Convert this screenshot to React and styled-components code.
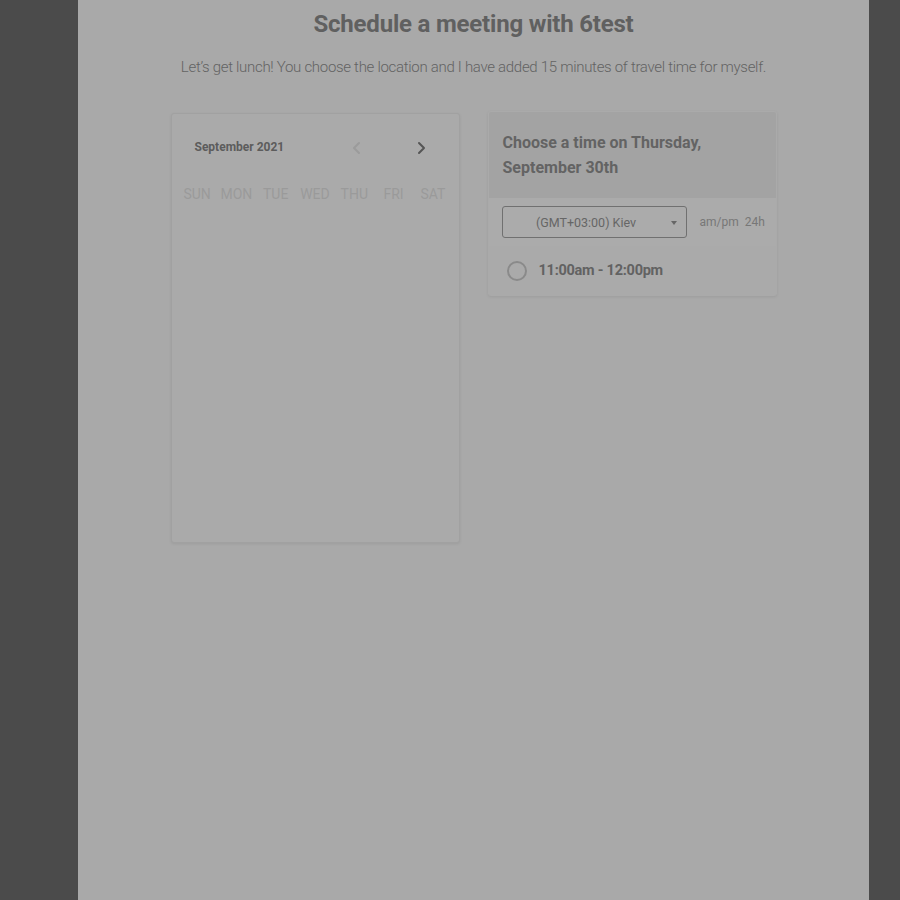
import React from "react";
import styled, { createGlobalStyle } from "styled-components";

const Global = createGlobalStyle`
  html, body { margin: 0; padding: 0; background: #4b4b4b; }
  body { font-family: Roboto, "Liberation Sans", sans-serif; }
`;

const Page = styled.div`
  display: flex;
  min-height: 900px;
  padding-left: 78px;
`;

const Sheet = styled.main`
  width: 791px;
  min-height: 900px;
  background: #a9a9a9;
  display: flex;
  flex-direction: column;
  align-items: center;
`;

const Title = styled.h1`
  margin: 9px 0 0;
  font-size: 24px;
  line-height: 30px;
  font-weight: 700;
  color: #606060;
  letter-spacing: -0.2px;
`;

const Subtitle = styled.p`
  margin: 18px 0 0;
  font-size: 15px;
  line-height: 20px;
  font-weight: 300;
  color: #636363;
  letter-spacing: -0.3px;
`;

const Columns = styled.div`
  display: flex;
  gap: 28px;
  margin-top: 34px;
  align-items: flex-start;
`;

const Card = styled.section`
  width: ${(p) => p.$w}px;
  box-sizing: border-box;
  border: 1px solid ${(p) => (p.$border ? "#a1a1a1" : "transparent")};
  border-radius: 3px;
  background: #aaaaaa;
  box-shadow: 0 1px 3px rgba(0, 0, 0, 0.08);
  overflow: hidden;
`;

const CalendarCard = styled(Card)`
  height: 430px;
  margin-top: 2px;
  padding: 0 6px;
`;

const MonthBar = styled.div`
  display: flex;
  align-items: center;
  height: 68px;
  padding: 0 0 0 17px;
`;

const MonthLabel = styled.div`
  flex: 1;
  font-size: 12px;
  font-weight: 700;
  color: #5c5c5c;
  margin-top: -2px;
`;

const NavButton = styled.button`
  width: 40px;
  height: 40px;
  border: none;
  background: none;
  padding: 0;
  display: flex;
  align-items: center;
  justify-content: center;
  color: ${(p) => (p.$disabled ? "#9b9b9b" : "#555555")};
  margin-left: ${(p) => p.$gap || 0}px;
  margin-right: ${(p) => p.$right || 0}px;
`;

const DayGrid = styled.div`
  display: grid;
  grid-template-columns: repeat(7, 1fr);
  margin-top: 2px;
`;

const DayName = styled.div`
  text-align: center;
  font-size: 14px;
  line-height: 20px;
  color: #9a9a9a;
`;

const TimesHeader = styled.div`
  background: #a3a3a3;
  padding: 18px 14px 18px;
  font-size: 16px;
  line-height: 25px;
  font-weight: 700;
  color: #636363;
`;

const ZoneRow = styled.div`
  display: flex;
  align-items: center;
  height: 48px;
  padding: 0 13px;
  background: #ababab;
`;

const Select = styled.div`
  position: relative;
  flex-shrink: 0;
  width: 185px;
  height: 32px;
  box-sizing: border-box;
  border: 1px solid #707070;
  border-radius: 3px;
  display: flex;
  align-items: center;
  justify-content: center;
  font-size: 12.5px;
  color: #666666;
  padding-right: 16px;
`;

const Caret = styled.span`
  position: absolute;
  right: 9px;
  top: 14px;
  width: 0;
  height: 0;
  border-left: 3.5px solid transparent;
  border-right: 3.5px solid transparent;
  border-top: 4px solid #666;
`;

const FormatToggle = styled.div`
  margin-left: 13px;
  display: flex;
  gap: 6px;
  font-size: 12px;
  color: #777777;
  white-space: nowrap;
`;

const SlotRow = styled.div`
  display: flex;
  align-items: center;
  height: 49px;
  padding: 0 18px;
  gap: 12px;
  background: #aaaaaa;
`;

const Radio = styled.span`
  width: 20px;
  height: 20px;
  box-sizing: border-box;
  border: 2px solid #8a8a8a;
  border-radius: 50%;
`;

const SlotLabel = styled.span`
  font-size: 14.5px;
  font-weight: 700;
  color: #626262;
  letter-spacing: -0.25px;
`;

const Chevron = ({ dir }) => (
  <svg width="16" height="16" viewBox="0 0 16 16" fill="none">
    <path
      d={dir === "left" ? "M10 3 L5 8 L10 13" : "M6 3 L11 8 L6 13"}
      stroke="currentColor"
      strokeWidth="2"
      strokeLinecap="round"
      strokeLinejoin="round"
    />
  </svg>
);

const days = ["SUN", "MON", "TUE", "WED", "THU", "FRI", "SAT"];

export default function App() {
  return (
    <>
      <Global />
      <Page>
        <Sheet>
          <Title>Schedule a meeting with 6test</Title>
          <Subtitle>
            Let’s get lunch! You choose the location and I have added 15 minutes of travel time for myself.
          </Subtitle>
          <Columns>
            <CalendarCard $w={289} $border>
              <MonthBar>
                <MonthLabel>September 2021</MonthLabel>
                <NavButton $disabled aria-label="Previous month">
                  <Chevron dir="left" />
                </NavButton>
                <NavButton $gap={24} $right={12} aria-label="Next month">
                  <Chevron dir="right" />
                </NavButton>
              </MonthBar>
              <DayGrid>
                {days.map((d) => (
                  <DayName key={d}>{d}</DayName>
                ))}
              </DayGrid>
            </CalendarCard>
            <Card $w={289}>
              <TimesHeader>
                Choose a time on Thursday,
                <br />
                September 30th
              </TimesHeader>
              <ZoneRow>
                <Select>
                  (GMT+03:00) Kiev
                  <Caret />
                </Select>
                <FormatToggle>
                  <span>am/pm</span>
                  <span>24h</span>
                </FormatToggle>
              </ZoneRow>
              <SlotRow>
                <Radio />
                <SlotLabel>11:00am - 12:00pm</SlotLabel>
              </SlotRow>
            </Card>
          </Columns>
        </Sheet>
      </Page>
    </>
  );
}
